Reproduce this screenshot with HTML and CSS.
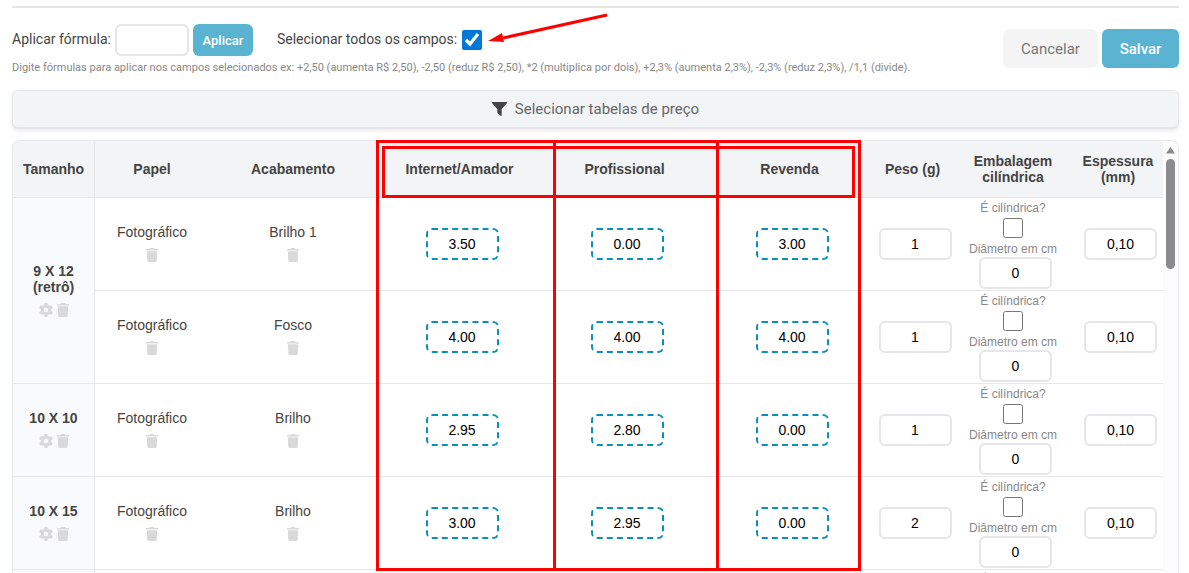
FILE: index.html
```
<!DOCTYPE html>
<html lang="pt-BR">
  <head>
    <title>Tabela de preços</title>
    <meta charset="UTF-8">
    <link rel="stylesheet" href="styles.css">
  </head>
  <body>
    <svg class="sprite" aria-hidden="true">
        <symbol id="trash" viewBox="0 0 12 14">
            <path d="M4 0h4l.6 1H12v1.600H0V1h3.400zM.8 3.200h10.400l-.5 9.500a1.400 1.400 0 0 1-1.400 1.300H2.700a1.400 1.400 0 0 1-1.400-1.300z"/>
        </symbol>
        <symbol id="gear" viewBox="0 0 24 24">
            <path fill-rule="evenodd" d="M9.500 0h5l.7 3.500 2.400 1.400L21 3.700l2.600 4.400-2.700 2.400v3l2.700 2.400-2.600 4.400-3.400-1.200-2.400 1.400-.7 3.500h-5l-.7-3.500-2.400-1.400L3 20.300.4 15.900l2.700-2.400v-3L.4 8.100 3 3.700l3.400 1.200 2.400-1.400zM12 8a4 4 0 1 0 0 8 4 4 0 0 0 0-8z"/>
        </symbol>
    </svg>

    <div class="container">
        <div class="toolbar">
            <div class="formula">
                <div class="formula-row">
                    <label for="formula">Aplicar fórmula:</label>
                    <input class="field formula-input" id="formula" type="text">
                    <button class="btn btn-apply">Aplicar</button>
                    <label class="select-all" for="todos">Selecionar todos os campos:</label>
                    <span class="check-wrap">
                        <input class="check" id="todos" type="checkbox" checked>
                        <svg class="arrow" viewBox="0 0 120 30" aria-hidden="true">
                            <path d="M15 25L119 2" stroke="#f00" stroke-width="3"/>
                            <path d="M0 28L14 20L16 29z" fill="#f00"/>
                        </svg>
                    </span>
                </div>
                <p class="hint">Digite fórmulas para aplicar nos campos selecionados ex: +2,50 (aumenta R$ 2,50), -2,50 (reduz R$ 2,50), *2 (multiplica por dois), +2,3% (aumenta 2,3%), -2,3% (reduz 2,3%), /1,1 (divide).</p>
            </div>
            <div class="actions">
                <button class="btn btn-cancel">Cancelar</button>
                <button class="btn btn-save">Salvar</button>
            </div>
        </div>

        <button class="filter">
            <svg class="funnel" viewBox="0 0 14 13" aria-hidden="true"><path d="M.6 0h12.800c.6 0 .8.700.4 1.100L9 6.800V12.400c0 .5-.5.700-.9.400L5.400 10.700 5 10V6.800L.2 1.100C-.2.700 0 0 .6 0z"/></svg>
            Selecionar tabelas de preço
        </button>

        <div class="panel">
            <div class="scroller">
                <table class="prices">
                    <colgroup>
                        <col class="c-size"><col class="c-paper"><col class="c-finish">
                        <col class="c-price"><col class="c-price"><col class="c-price">
                        <col class="c-weight"><col class="c-pack"><col class="c-thick">
                    </colgroup>
                    <thead>
                        <tr>
                            <th class="size-head">Tamanho</th>
                            <th>Papel</th>
                            <th>Acabamento</th>
                            <th>Internet/Amador</th>
                            <th>Profissional</th>
                            <th>Revenda</th>
                            <th>Peso (g)</th>
                            <th>Embalagem cilíndrica</th>
                            <th>Espessura (mm)</th>
                        </tr>
                    </thead>
                    <tbody></tbody>
                </table>
                <div class="scrollbar" aria-hidden="true">
                    <svg class="scroll-up" viewBox="0 0 9 7"><path d="M4.500 0L9 6.500H0z"/></svg>
                    <div class="thumb"></div>
                </div>
            </div>
            <!-- marcações em vermelho -->
            <div class="mark mark-columns"></div>
            <div class="mark mark-middle"></div>
            <div class="mark mark-head"></div>
        </div>
    </div>
    <script>
        const sizes = [
            { name: '9 X 12<br>(retrô)', rows: [
                ['Fotográfico', 'Brilho 1', '3.50', '0.00', '3.00', '1', '0', '0,10'],
                ['Fotográfico', 'Fosco', '4.00', '4.00', '4.00', '1', '0', '0,10']
            ]},
            { name: '10 X 10', rows: [['Fotográfico', 'Brilho', '2.95', '2.80', '0.00', '1', '0', '0,10']] },
            { name: '10 X 15', rows: [['Fotográfico', 'Brilho', '3.00', '2.95', '0.00', '2', '0', '0,10']] },
            { name: '', rows: [['', '', '', '', '', '', '', '']] }
        ];

        const icon = (id, label) =>
            `<button class="icon-btn" aria-label="${label}"><svg class="icon icon-${id}"><use href="#${id}"/></svg></button>`;
        const field = (value, label, cls = '') =>
            `<input class="field ${cls}" type="text" value="${value}" aria-label="${label}">`;
        const named = text => `<td>${text}<div class="icons">${icon('trash', 'Excluir')}</div></td>`;

        let html = '';
        let n = 0;
        sizes.forEach(size => {
            size.rows.forEach((r, i) => {
                n++;
                html += '<tr>';
                if (i === 0) {
                    html += `<th class="size" rowspan="${size.rows.length}">${size.name}
                        <div class="icons">${icon('gear', 'Configurar')}${icon('trash', 'Excluir')}</div></th>`;
                }
                html += named(r[0]) + named(r[1]);
                html += `<td>${field(r[2], 'Internet/Amador', 'selected')}</td>`;
                html += `<td>${field(r[3], 'Profissional', 'selected')}</td>`;
                html += `<td>${field(r[4], 'Revenda', 'selected')}</td>`;
                html += `<td>${field(r[5], 'Peso (g)')}</td>`;
                html += `<td class="pack">
                    <label for="cil${n}">É cilíndrica?</label>
                    <input class="check" id="cil${n}" type="checkbox">
                    <label for="dia${n}">Diâmetro em cm</label>
                    <input class="field" id="dia${n}" type="text" value="${r[6]}"></td>`;
                html += `<td>${field(r[7], 'Espessura (mm)')}</td></tr>`;
            });
        });
        document.querySelector('.prices tbody').innerHTML = html;
    </script>
  </body>
</html>
```
FILE: styles.css
```
*{
    margin: 0;
    padding: 0;
    box-sizing: border-box;
}
html,body{height: 100%;}
body{
    background: #fff;
    color: #444;
    font-family: Roboto, sans-serif;
    font-size: 14px;
    overflow: hidden;
}
button{
    border: none;
    font-family: inherit;
    cursor: pointer;
}
.sprite{
    display: none;
}
.container{
    height: 100%;
    padding: 6px 10px 0 12px;
    display: flex;
    flex-direction: column;
}

/* toolbar */
.toolbar{
    border-top: 2px solid #e5e5e5;
    padding-top: 16px;
    height: 84px;
    flex: none;
    display: flex;
    justify-content: space-between;
}
.formula-row{
    display: flex;
    align-items: center;
    gap: 4px;
    height: 32px;
}
.formula-row label{
    padding-bottom: 2px;
}
.field{
    width: 73px;
    height: 32px;
    border: 2px solid #e5e5eb;
    border-radius: 6px;
    background: #fff;
    color: #000;
    font-family: "Liberation Sans", sans-serif;
    font-size: 14px;
    text-align: center;
}
.formula-input{
    width: 74px;
}
.btn{
    border-radius: 6px;
    background: #5ab4d1;
    color: #fff;
    font-size: 15px;
    font-weight: 500;
    height: 39px;
}
.btn-apply{
    width: 60px;
    height: 32px;
    font-size: 13px;
}
.select-all{
    margin-left: 20px;
}
.check-wrap{
    position: relative;
    display: flex;
    margin-left: 1px;
}
.check{
    width: 20px;
    height: 20px;
    accent-color: #0078d7;
}
.arrow{
    position: absolute;
    left: 26px;
    top: -17px;
    width: 120px;
    height: 30px;
    fill: none;
}
.hint{
    margin-top: 4px;
    color: #888;
    font-size: 11px;
    line-height: 16px;
}
.actions{
    display: flex;
    gap: 4px;
    padding-top: 5px;
}
.btn-cancel{
    width: 95px;
    background: #f4f4f4;
    color: #777;
    font-weight: 400;
}
.btn-save{
    width: 77px;
}

.filter{
    flex: none;
    display: flex;
    align-items: center;
    justify-content: center;
    gap: 8px;
    height: 39px;
    border: 1px solid #e5e7eb;
    border-bottom: 2px solid #e5e5eb;
    border-radius: 6px;
    background: #f3f4f6;
    box-shadow: 0 2px 4px rgba(0, 0, 0, .08);
    color: #666;
    font-size: 15px;
}
.funnel{
    width: 15px;
    height: 14px;
    fill: #444;
}

/* price table */
.panel{
    position: relative;
    flex: 1;
    min-height: 0;
    margin-top: 11px;
}
.scroller{
    display: flex;
    align-items: flex-start;
    height: 100%;
    overflow: hidden;
    border: 1px solid #e5e7eb;
    border-bottom: none;
    border-radius: 8px 8px 0 0;
}
.prices{
    flex: 1;
    min-width: 0;
    table-layout: fixed;
    border-spacing: 0;
    font-family: "Liberation Sans", sans-serif;
    font-size: 14px;
    line-height: 16px;
    text-align: center;
}
.c-size{width: 82px;}
.c-paper{width: 114px;}
.c-finish{width: 168px;}
.c-price{width: 165px;}
.c-weight{width: 81px;}
.c-pack{width: 120px;}
.c-thick{width: 90px;}
.prices th,
.prices td{
    height: 93px;
    border-bottom: 1px solid #e5e7eb;
    vertical-align: middle;
}
.prices thead th{
    height: 57px;
    background: #f3f4f6;
}
.prices .size-head,
.prices .size{
    border-right: 1px solid #e5e7eb;
}
.prices .size{
    background: #f9fafc;
}
.prices td .field{
    margin-left: 5px;
}
.prices .selected{
    border: 2px dashed #088fba;
}
.icons{
    display: flex;
    justify-content: center;
    gap: 4px;
    padding: 8px 0 2px;
}
.icon-btn{
    display: flex;
    background: none;
}
.icon{
    width: 12px;
    height: 14px;
    fill: #d9d9d9;
}
.icon-gear{
    width: 14px;
}
.prices .pack{
    padding: 3px 0 1px;
}
.pack label{
    display: block;
    color: #888;
    font-size: 12px;
    line-height: 15px;
}
.pack .check{
    display: block;
    margin: 2px auto 4px;
}
.prices .pack .field{
    display: block;
    margin-left: 26px;
}

.scrollbar{
    width: 15px;
    height: 100%;
    padding-top: 6px;
    background: #fcfcfc;
    display: flex;
    flex-direction: column;
    align-items: center;
    gap: 5px;
}
.scroll-up{
    width: 9px;
    height: 7px;
    fill: #8b8b8b;
}
.thumb{
    width: 9px;
    height: 110px;
    border-radius: 5px;
    background: #8b8b8b;
}

.mark{
    position: absolute;
    border: 3px solid #f00;
    pointer-events: none;
}
.mark-columns{
    left: 364px;
    top: 0;
    width: 485px;
    height: 431px;
}
.mark-middle{
    left: 541px;
    top: 0;
    width: 166px;
    height: 431px;
}
.mark-head{
    left: 370px;
    top: 6px;
    width: 473px;
    height: 52px;
}
```
